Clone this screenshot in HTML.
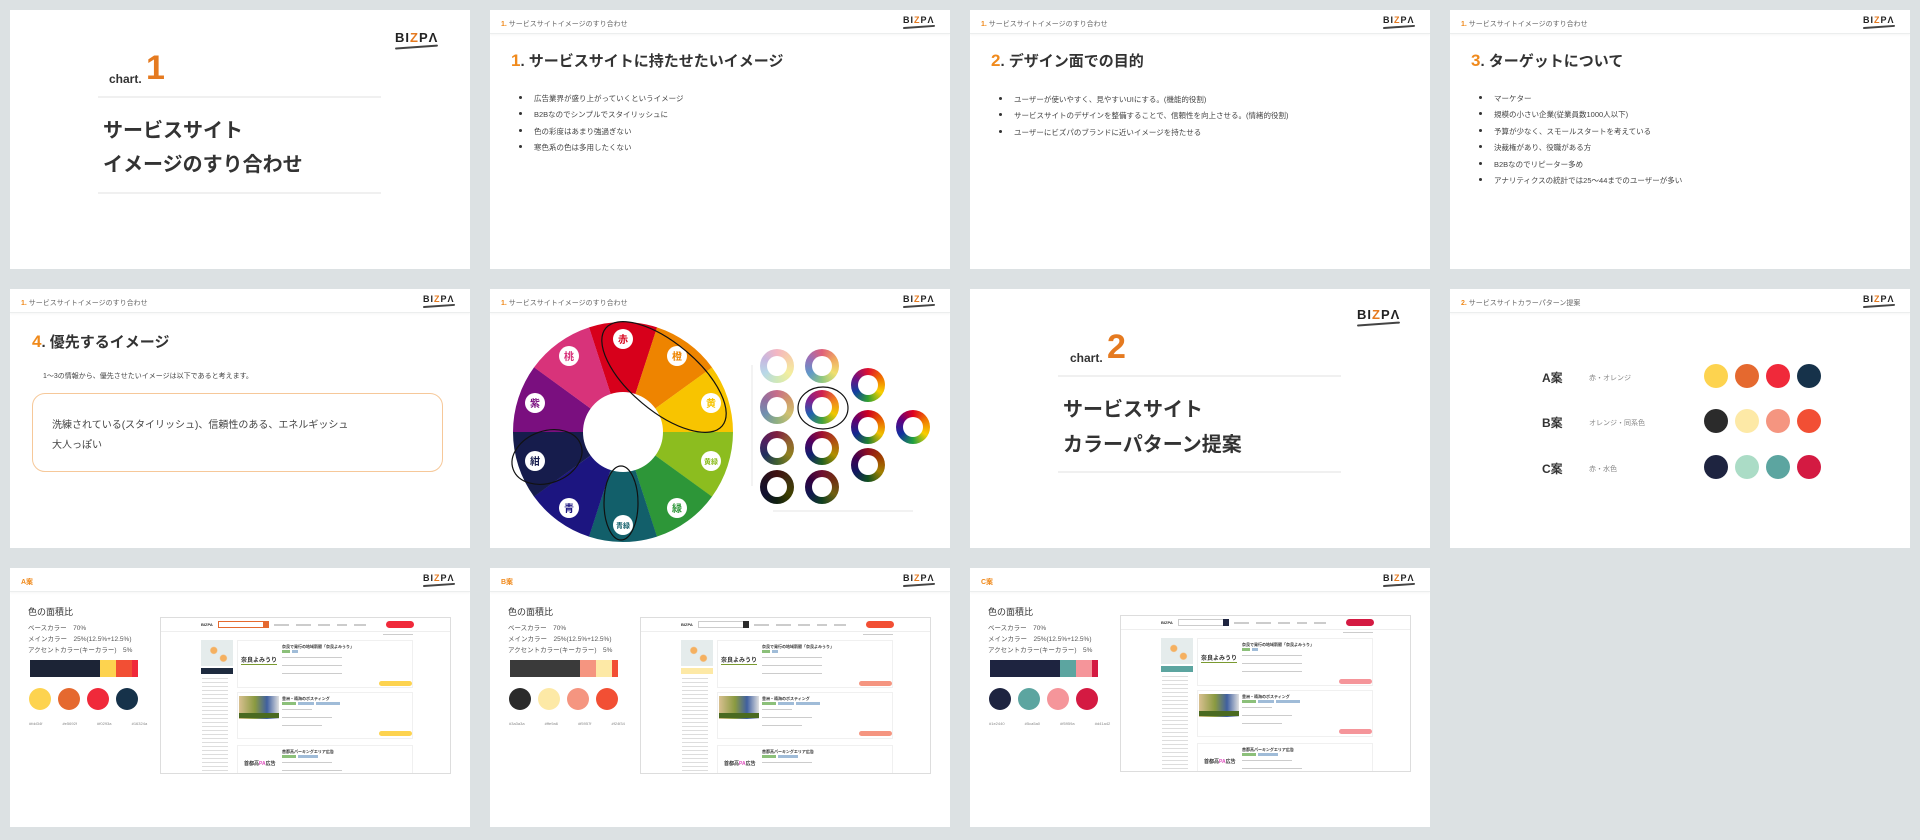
<!DOCTYPE html>
<html><head><meta charset="utf-8"><style>
*{margin:0;padding:0;box-sizing:border-box}
body{width:1920px;height:840px;background:#dce1e3;position:relative;overflow:hidden;font-family:"Liberation Sans","Noto Sans CJK JP",sans-serif;color:#333}
.s{position:absolute;width:460px;height:259px;background:#fff;overflow:hidden}
.a{position:absolute}
.hd{position:absolute;left:0;top:0;width:460px;height:24px;border-bottom:1px solid #eceeee;box-shadow:0 1px 2px rgba(0,0,0,.04)}
.ht{position:absolute;left:11px;top:9px;font-size:7px;color:#666;white-space:nowrap}
.ht b{color:#f08a1c;font-weight:bold}
.lg{position:absolute;font-weight:bold;color:#222;letter-spacing:1px;white-space:nowrap}
.lg i{font-style:normal;color:#e57a20}
.lg:after{content:"";position:absolute;left:0;right:0;bottom:-3px;height:2px;background:#444;border-radius:2px;transform:rotate(-4deg)}
.ttl{position:absolute;left:21px;top:40px;font-size:15px;font-weight:bold;color:#333;white-space:nowrap}
.ttl b{color:#f08a1c;font-size:17px}
.ul{position:absolute;left:29px;font-size:7.5px;color:#444;list-style:none}
.ul li{height:16.4px;position:relative;padding-left:15px;white-space:nowrap}
.ul li:before{content:"";position:absolute;left:0;top:3px;width:3px;height:3px;border-radius:50%;background:#333}
.chl{position:absolute;left:88px;width:283px;height:2px;background:#f0f0f0}
.big{position:absolute;left:93px;font-size:20px;font-weight:bold;color:#333;white-space:nowrap}
.dot{position:absolute;border-radius:50%}
.ring{position:absolute;width:34px;height:34px;border-radius:50%}
.ring:after{content:"";position:absolute;left:7px;top:7px;width:20px;height:20px;border-radius:50%;background:#fff}
.mk{position:absolute;left:150px;top:49px;width:291px;height:157px;border:1px solid #ddd;overflow:hidden;background:#fff}
.gl{position:absolute;height:2px;background:#ccc}
.card{position:absolute;left:76px;width:176px;border:1px solid #f0f0f0}
.tag{position:absolute;height:3px;top:0}
</style></head><body>

<div class="s" style="left:10px;top:10px">
<div class="lg" style="left:385px;top:20px;font-size:13px">BI<i>Z</i>PΛ</div>
<div class="a" style="left:99px;top:62px;font-size:12px;font-weight:bold;color:#333">chart.</div>
<div class="a" style="left:136px;top:40px;font-size:34px;font-weight:bold;color:#e57a20;line-height:36px">1</div>
<div class="chl" style="top:86px"></div>
<div class="big" style="top:104px">サービスサイト</div>
<div class="big" style="top:138px">イメージのすり合わせ</div>
<div class="chl" style="top:182px"></div>
</div>

<div class="s" style="left:490px;top:10px">
<div class="hd"></div><div class="ht"><b>1.</b> サービスサイトイメージのすり合わせ</div>
<div class="lg" style="left:413px;top:5px;font-size:9px">BI<i>Z</i>PΛ</div>
<div class="ttl"><b>1</b>. サービスサイトに持たせたいイメージ</div>
<ul class="ul" style="top:83px"><li>広告業界が盛り上がっていくというイメージ</li><li>B2Bなのでシンプルでスタイリッシュに</li><li>色の彩度はあまり強過ぎない</li><li>寒色系の色は多用したくない</li></ul>
</div>

<div class="s" style="left:970px;top:10px">
<div class="hd"></div><div class="ht"><b>1.</b> サービスサイトイメージのすり合わせ</div>
<div class="lg" style="left:413px;top:5px;font-size:9px">BI<i>Z</i>PΛ</div>
<div class="ttl"><b>2</b>. デザイン面での目的</div>
<ul class="ul" style="top:84px"><li>ユーザーが使いやすく、見やすいUIにする。(機能的役割)</li><li>サービスサイトのデザインを整備することで、信頼性を向上させる。(情緒的役割)</li><li>ユーザーにビズパのブランドに近いイメージを持たせる</li></ul>
</div>

<div class="s" style="left:1450px;top:10px">
<div class="hd"></div><div class="ht"><b>1.</b> サービスサイトイメージのすり合わせ</div>
<div class="lg" style="left:413px;top:5px;font-size:9px">BI<i>Z</i>PΛ</div>
<div class="ttl"><b>3</b>. ターゲットについて</div>
<ul class="ul" style="top:83px"><li>マーケター</li><li>規模の小さい企業(従業員数1000人以下)</li><li>予算が少なく、スモールスタートを考えている</li><li>決裁権があり、役職がある方</li><li>B2Bなのでリピーター多め</li><li>アナリティクスの統計では25～44までのユーザーが多い</li></ul>
</div>

<div class="s" style="left:10px;top:289px">
<div class="hd"></div><div class="ht"><b>1.</b> サービスサイトイメージのすり合わせ</div>
<div class="lg" style="left:413px;top:5px;font-size:9px">BI<i>Z</i>PΛ</div>
<div class="ttl" style="left:22px;top:42px"><b>4</b>. 優先するイメージ</div>
<div class="a" style="left:33px;top:82px;font-size:7px;color:#444">1～3の情報から、優先させたいイメージは以下であると考えます。</div>
<div class="a" style="left:22px;top:104px;width:411px;height:79px;border:1.5px solid #f6c899;border-radius:13px"></div>
<div class="a" style="left:42px;top:127px;font-size:10px;color:#444;line-height:20px;white-space:nowrap">洗練されている(スタイリッシュ)、信頼性のある、エネルギッシュ<br>大人っぽい</div>
</div>

<div class="s" style="left:490px;top:289px">
<div class="hd"></div><div class="ht"><b>1.</b> サービスサイトイメージのすり合わせ</div>
<div class="lg" style="left:413px;top:5px;font-size:9px">BI<i>Z</i>PΛ</div>
<svg class="a" style="left:0;top:0" width="460" height="259" font-family="Liberation Sans,Noto Sans CJK JP,sans-serif">
<g fill="none" stroke-width="70" stroke-dasharray="47.2 471.24">
<circle cx="133" cy="143" r="75" stroke="#d7001b" transform="rotate(-108 133 143)"/>
<circle cx="133" cy="143" r="75" stroke="#ee8400" transform="rotate(-72 133 143)"/>
<circle cx="133" cy="143" r="75" stroke="#f8c400" transform="rotate(-36 133 143)"/>
<circle cx="133" cy="143" r="75" stroke="#8cbd1f" transform="rotate(0 133 143)"/>
<circle cx="133" cy="143" r="75" stroke="#2d9638" transform="rotate(36 133 143)"/>
<circle cx="133" cy="143" r="75" stroke="#125f6a" transform="rotate(72 133 143)"/>
<circle cx="133" cy="143" r="75" stroke="#1c1580" transform="rotate(108 133 143)"/>
<circle cx="133" cy="143" r="75" stroke="#161c4c" transform="rotate(144 133 143)"/>
<circle cx="133" cy="143" r="75" stroke="#7a0f7f" transform="rotate(180 133 143)"/>
<circle cx="133" cy="143" r="75" stroke="#d8337a" transform="rotate(216 133 143)"/>
</g>
<g fill="#fff"><circle cx="133" cy="50" r="10"/><circle cx="187" cy="67" r="10"/><circle cx="221" cy="114" r="10"/><circle cx="221" cy="172" r="10"/><circle cx="187" cy="219" r="10"/><circle cx="133" cy="236" r="10"/><circle cx="79" cy="219" r="10"/><circle cx="45" cy="172" r="10"/><circle cx="45" cy="114" r="10"/><circle cx="79" cy="67" r="10"/></g>
<g font-size="10" font-weight="bold" text-anchor="middle">
<text x="133" y="54" fill="#d7001b">赤</text><text x="187" y="71" fill="#ee8400">橙</text><text x="221" y="118" fill="#f8c400">黄</text><text x="221" y="175" fill="#8cbd1f" font-size="7">黄緑</text><text x="187" y="223" fill="#2d9638">緑</text><text x="133" y="239" fill="#125f6a" font-size="7">青緑</text><text x="79" y="223" fill="#1c1580">青</text><text x="45" y="176" fill="#161c4c">紺</text><text x="45" y="118" fill="#7a0f7f">紫</text><text x="79" y="71" fill="#d8337a">桃</text>
</g>
<g fill="none" stroke="#111" stroke-width="1.2">
<ellipse cx="174" cy="88" rx="76" ry="34" transform="rotate(40 174 88)"/>
<ellipse cx="57" cy="168" rx="36" ry="26" transform="rotate(-20 57 168)"/>
<ellipse cx="131" cy="214" rx="17" ry="37"/>
<ellipse cx="333" cy="119" rx="25" ry="21"/>
</g>
<line x1="262" y1="76" x2="262" y2="197" stroke="#ddd" stroke-width=".7"/>
<line x1="283" y1="222" x2="423" y2="222" stroke="#ddd" stroke-width=".7"/>
</svg>
<div class="ring" style="left:270px;top:60px;background:conic-gradient(#f4b6c2,#f6d2a8,#f4ee9e,#cfe8b8,#b8d8e8,#c8b8e0,#f4b6c2)"></div>
<div class="ring" style="left:315px;top:60px;background:conic-gradient(#e0607a,#f0a860,#f0e070,#90c880,#6098c8,#9870b8,#e0607a)"></div>
<div class="ring" style="left:270px;top:101px;background:conic-gradient(#c86e8a,#d09a6a,#d0c070,#90b080,#7090b0,#9070a0,#c86e8a)"></div>
<div class="ring" style="left:315px;top:101px;background:conic-gradient(#d02050,#f08020,#f0c800,#40a040,#2060b0,#802090,#d02050)"></div>
<div class="ring" style="left:361px;top:79px;background:conic-gradient(#e01030,#f07000,#f8d000,#30a030,#1040a0,#701080,#e01030)"></div>
<div class="ring" style="left:361px;top:121px;background:conic-gradient(#d00020,#e86000,#f0c000,#208030,#102890,#600070,#d00020)"></div>
<div class="ring" style="left:406px;top:121px;background:conic-gradient(#e00020,#f07800,#f8d000,#20a040,#1030a0,#600080,#e00020)"></div>
<div class="ring" style="left:270px;top:142px;background:conic-gradient(#802040,#906030,#908020,#406030,#203060,#502060,#802040)"></div>
<div class="ring" style="left:315px;top:142px;background:conic-gradient(#a01030,#b05010,#b09000,#206020,#102070,#500060,#a01030)"></div>
<div class="ring" style="left:361px;top:159px;background:conic-gradient(#901020,#a04000,#a08000,#105020,#101860,#400050,#901020)"></div>
<div class="ring" style="left:270px;top:181px;background:conic-gradient(#401010,#403010,#404000,#102010,#101030,#201020,#401010)"></div>
<div class="ring" style="left:315px;top:181px;background:conic-gradient(#701030,#703010,#706010,#104020,#101850,#300040,#701030)"></div>
</div>

<div class="s" style="left:970px;top:289px">
<div class="lg" style="left:387px;top:18px;font-size:13px">BI<i>Z</i>PΛ</div>
<div class="a" style="left:100px;top:62px;font-size:12px;font-weight:bold;color:#333">chart.</div>
<div class="a" style="left:137px;top:40px;font-size:34px;font-weight:bold;color:#e57a20;line-height:36px">2</div>
<div class="chl" style="top:86px"></div>
<div class="big" style="top:104px">サービスサイト</div>
<div class="big" style="top:139px">カラーパターン提案</div>
<div class="chl" style="top:182px"></div>
</div>

<div class="s" style="left:1450px;top:289px">
<div class="hd"></div><div class="ht"><b>2.</b> サービスサイトカラーパターン提案</div>
<div class="lg" style="left:413px;top:5px;font-size:9px">BI<i>Z</i>PΛ</div>
<div class="a" style="left:92px;top:80px;font-size:12px;font-weight:bold">A案</div>
<div class="a" style="left:139px;top:84px;font-size:7px;color:#888">赤・オレンジ</div>
<div class="a" style="left:92px;top:125px;font-size:12px;font-weight:bold">B案</div>
<div class="a" style="left:139px;top:129px;font-size:7px;color:#888">オレンジ・同系色</div>
<div class="a" style="left:92px;top:171px;font-size:12px;font-weight:bold">C案</div>
<div class="a" style="left:139px;top:175px;font-size:7px;color:#888">赤・水色</div>
<div class="dot" style="left:254px;top:75px;width:24px;height:24px;background:#fdd34f"></div>
<div class="dot" style="left:285px;top:75px;width:24px;height:24px;background:#e5692f"></div>
<div class="dot" style="left:316px;top:75px;width:24px;height:24px;background:#f0293a"></div>
<div class="dot" style="left:347px;top:75px;width:24px;height:24px;background:#16324a"></div>
<div class="dot" style="left:254px;top:120px;width:24px;height:24px;background:#2b2b2b"></div>
<div class="dot" style="left:285px;top:120px;width:24px;height:24px;background:#fde9a6"></div>
<div class="dot" style="left:316px;top:120px;width:24px;height:24px;background:#f59580"></div>
<div class="dot" style="left:347px;top:120px;width:24px;height:24px;background:#f24f34"></div>
<div class="dot" style="left:254px;top:166px;width:24px;height:24px;background:#1e2440"></div>
<div class="dot" style="left:285px;top:166px;width:24px;height:24px;background:#abdcc6"></div>
<div class="dot" style="left:316px;top:166px;width:24px;height:24px;background:#5ca5a0"></div>
<div class="dot" style="left:347px;top:166px;width:24px;height:24px;background:#d41a42"></div>
</div>

<div class="s" style="left:10px;top:568px">
<div class="hd"></div><div class="ht" style="top:9px"><b style="font-size:7px">A案</b></div>
<div class="lg" style="left:413px;top:5px;font-size:9px">BI<i>Z</i>PΛ</div>
<div class="a" style="left:18px;top:37px;font-size:9px">色の面積比</div>
<div class="a" style="left:18px;top:55px;font-size:6.5px;color:#555;line-height:11px;white-space:nowrap">ベースカラー　70%<br>メインカラー　25%(12.5%+12.5%)<br>アクセントカラー(キーカラー)　5%</div>
<div class="a" style="left:20px;top:92px;width:108px;height:17px;display:flex"><div style="width:70px;background:#1c2436"></div><div style="width:16px;background:#fdd34f"></div><div style="width:16px;background:#f24f34"></div><div style="width:6px;background:#f0293a"></div></div>
<div class="dot" style="left:19px;top:120px;width:22px;height:22px;background:#fdd34f"></div>
<div class="dot" style="left:48px;top:120px;width:22px;height:22px;background:#e5692f"></div>
<div class="dot" style="left:77px;top:120px;width:22px;height:22px;background:#f0293a"></div>
<div class="dot" style="left:106px;top:120px;width:22px;height:22px;background:#16324a"></div>
<div class="a" style="left:19px;top:153px;font-size:4px;color:#888;word-spacing:19px;white-space:nowrap">#fdd34f #e5692f #f0293a #16324a</div>
<div class="mk">
<div class="a" style="left:40px;top:4px;font-size:4px;font-weight:bold">BIZPA</div>
<div class="a" style="left:57px;top:3px;width:51px;height:7px;border:1px solid #e5692f"></div><div class="a" style="left:102px;top:3px;width:6px;height:7px;background:#e5692f"></div>
<div class="gl" style="left:113px;top:6px;width:15px"></div><div class="gl" style="left:135px;top:6px;width:15px"></div><div class="gl" style="left:157px;top:6px;width:12px"></div><div class="gl" style="left:176px;top:6px;width:10px"></div><div class="gl" style="left:193px;top:6px;width:12px"></div>
<div class="a" style="left:225px;top:3px;width:28px;height:7px;border-radius:4px;background:#f0293a"></div>
<div class="a" style="left:0;top:13px;width:291px;height:1px;background:#eee"></div>
<div class="gl" style="left:222px;top:16px;width:30px;height:1px"></div>
<div class="a" style="left:40px;top:22px;width:32px;height:26px;background:radial-gradient(circle at 40% 40%,#f5b060 0 3px,transparent 4px),radial-gradient(circle at 70% 70%,#f5b060 0 3px,transparent 4px),#e5ecec"></div>
<div class="a" style="left:40px;top:50px;width:32px;height:6px;background:#1e2b3f"></div>
<div class="a" style="left:41px;top:58px;width:26px;height:99px;background:repeating-linear-gradient(#fff 0 2px,#ddd 2px 3px,#fff 3px 4px)"></div>
<div class="card" style="top:22px;height:48px"><div class="a" style="left:3px;top:14px;font-size:6px;font-weight:bold;border-bottom:1px solid #7a9a30">奈良よみうり</div><div class="a" style="left:44px;top:3px;font-size:4px;font-weight:bold">奈良で発行の地域新聞「奈良よみうり」</div><div class="tag" style="left:44px;top:9px;width:8px;background:#8cc07a"></div><div class="tag" style="left:54px;top:9px;width:6px;background:#a0bcd8"></div><div class="gl" style="left:44px;top:16px;width:60px;height:1px"></div><div class="gl" style="left:44px;top:24px;width:60px;height:1px"></div><div class="gl" style="left:44px;top:32px;width:60px;height:1px"></div><div class="a" style="left:141px;top:40px;width:33px;height:5px;border-radius:3px;background:#fdd34f"></div></div>
<div class="card" style="top:74px;height:47px"><div class="a" style="left:1px;top:3px;width:40px;height:23px;background:linear-gradient(90deg,#d8c090,#8a9a40 40%,#4060a0 70%,#e0e0e0)"></div><div class="a" style="left:1px;top:20px;width:40px;height:5px;background:#4a6a20"></div><div class="a" style="left:44px;top:3px;font-size:4px;font-weight:bold">豊洲・晴海のポスティング</div><div class="tag" style="left:44px;top:9px;width:14px;background:#8cc07a"></div><div class="tag" style="left:60px;top:9px;width:16px;background:#a0bcd8"></div><div class="tag" style="left:78px;top:9px;width:24px;background:#a0bcd8"></div><div class="gl" style="left:44px;top:16px;width:30px;height:1px"></div><div class="gl" style="left:44px;top:24px;width:50px;height:1px"></div><div class="gl" style="left:44px;top:32px;width:40px;height:1px"></div><div class="a" style="left:141px;top:38px;width:33px;height:5px;border-radius:3px;background:#fdd34f"></div></div>
<div class="card" style="top:127px;height:40px"><div class="a" style="left:6px;top:14px;font-size:5px;font-weight:bold">首都高<span style="color:#e050c0">PA</span>広告</div><div class="a" style="left:44px;top:3px;font-size:4px;font-weight:bold">首都高パーキングエリア広告</div><div class="tag" style="left:44px;top:9px;width:14px;background:#8cc07a"></div><div class="tag" style="left:60px;top:9px;width:20px;background:#a0bcd8"></div><div class="gl" style="left:44px;top:16px;width:50px;height:1px"></div><div class="gl" style="left:44px;top:24px;width:60px;height:1px"></div></div>
</div>
</div>

<div class="s" style="left:490px;top:568px">
<div class="hd"></div><div class="ht" style="top:9px"><b style="font-size:7px">B案</b></div>
<div class="lg" style="left:413px;top:5px;font-size:9px">BI<i>Z</i>PΛ</div>
<div class="a" style="left:18px;top:37px;font-size:9px">色の面積比</div>
<div class="a" style="left:18px;top:55px;font-size:6.5px;color:#555;line-height:11px;white-space:nowrap">ベースカラー　70%<br>メインカラー　25%(12.5%+12.5%)<br>アクセントカラー(キーカラー)　5%</div>
<div class="a" style="left:20px;top:92px;width:108px;height:17px;display:flex"><div style="width:70px;background:#3a3a3a"></div><div style="width:16px;background:#f59580"></div><div style="width:16px;background:#fde9a6"></div><div style="width:6px;background:#f24f34"></div></div>
<div class="dot" style="left:19px;top:120px;width:22px;height:22px;background:#2b2b2b"></div>
<div class="dot" style="left:48px;top:120px;width:22px;height:22px;background:#fde9a6"></div>
<div class="dot" style="left:77px;top:120px;width:22px;height:22px;background:#f59580"></div>
<div class="dot" style="left:106px;top:120px;width:22px;height:22px;background:#f24f34"></div>
<div class="a" style="left:19px;top:153px;font-size:4px;color:#888;word-spacing:19px;white-space:nowrap">#3a3a3a #ffe9a6 #f5957f #f24f34</div>
<div class="mk">
<div class="a" style="left:40px;top:4px;font-size:4px;font-weight:bold">BIZPA</div>
<div class="a" style="left:57px;top:3px;width:51px;height:7px;border:1px solid #ccc"></div><div class="a" style="left:102px;top:3px;width:6px;height:7px;background:#2b2b2b"></div>
<div class="gl" style="left:113px;top:6px;width:15px"></div><div class="gl" style="left:135px;top:6px;width:15px"></div><div class="gl" style="left:157px;top:6px;width:12px"></div><div class="gl" style="left:176px;top:6px;width:10px"></div><div class="gl" style="left:193px;top:6px;width:12px"></div>
<div class="a" style="left:225px;top:3px;width:28px;height:7px;border-radius:4px;background:#f24f34"></div>
<div class="a" style="left:0;top:13px;width:291px;height:1px;background:#eee"></div>
<div class="gl" style="left:222px;top:16px;width:30px;height:1px"></div>
<div class="a" style="left:40px;top:22px;width:32px;height:26px;background:radial-gradient(circle at 40% 40%,#f5b060 0 3px,transparent 4px),radial-gradient(circle at 70% 70%,#f5b060 0 3px,transparent 4px),#e5ecec"></div>
<div class="a" style="left:40px;top:50px;width:32px;height:6px;background:#fde9a6"></div>
<div class="a" style="left:41px;top:58px;width:26px;height:99px;background:repeating-linear-gradient(#fff 0 2px,#ddd 2px 3px,#fff 3px 4px)"></div>
<div class="card" style="top:22px;height:48px"><div class="a" style="left:3px;top:14px;font-size:6px;font-weight:bold;border-bottom:1px solid #7a9a30">奈良よみうり</div><div class="a" style="left:44px;top:3px;font-size:4px;font-weight:bold">奈良で発行の地域新聞「奈良よみうり」</div><div class="tag" style="left:44px;top:9px;width:8px;background:#8cc07a"></div><div class="tag" style="left:54px;top:9px;width:6px;background:#a0bcd8"></div><div class="gl" style="left:44px;top:16px;width:60px;height:1px"></div><div class="gl" style="left:44px;top:24px;width:60px;height:1px"></div><div class="gl" style="left:44px;top:32px;width:60px;height:1px"></div><div class="a" style="left:141px;top:40px;width:33px;height:5px;border-radius:3px;background:#f59580"></div></div>
<div class="card" style="top:74px;height:47px"><div class="a" style="left:1px;top:3px;width:40px;height:23px;background:linear-gradient(90deg,#d8c090,#8a9a40 40%,#4060a0 70%,#e0e0e0)"></div><div class="a" style="left:1px;top:20px;width:40px;height:5px;background:#4a6a20"></div><div class="a" style="left:44px;top:3px;font-size:4px;font-weight:bold">豊洲・晴海のポスティング</div><div class="tag" style="left:44px;top:9px;width:14px;background:#8cc07a"></div><div class="tag" style="left:60px;top:9px;width:16px;background:#a0bcd8"></div><div class="tag" style="left:78px;top:9px;width:24px;background:#a0bcd8"></div><div class="gl" style="left:44px;top:16px;width:30px;height:1px"></div><div class="gl" style="left:44px;top:24px;width:50px;height:1px"></div><div class="gl" style="left:44px;top:32px;width:40px;height:1px"></div><div class="a" style="left:141px;top:38px;width:33px;height:5px;border-radius:3px;background:#f59580"></div></div>
<div class="card" style="top:127px;height:40px"><div class="a" style="left:6px;top:14px;font-size:5px;font-weight:bold">首都高<span style="color:#e050c0">PA</span>広告</div><div class="a" style="left:44px;top:3px;font-size:4px;font-weight:bold">首都高パーキングエリア広告</div><div class="tag" style="left:44px;top:9px;width:14px;background:#8cc07a"></div><div class="tag" style="left:60px;top:9px;width:20px;background:#a0bcd8"></div><div class="gl" style="left:44px;top:16px;width:50px;height:1px"></div></div>
</div>
</div>

<div class="s" style="left:970px;top:568px">
<div class="hd"></div><div class="ht" style="top:9px"><b style="font-size:7px">C案</b></div>
<div class="lg" style="left:413px;top:5px;font-size:9px">BI<i>Z</i>PΛ</div>
<div class="a" style="left:18px;top:37px;font-size:9px">色の面積比</div>
<div class="a" style="left:18px;top:55px;font-size:6.5px;color:#555;line-height:11px;white-space:nowrap">ベースカラー　70%<br>メインカラー　25%(12.5%+12.5%)<br>アクセントカラー(キーカラー)　5%</div>
<div class="a" style="left:20px;top:92px;width:108px;height:17px;display:flex"><div style="width:70px;background:#1e2440"></div><div style="width:16px;background:#5ca5a0"></div><div style="width:16px;background:#f5959a"></div><div style="width:6px;background:#d41a42"></div></div>
<div class="dot" style="left:19px;top:120px;width:22px;height:22px;background:#1e2440"></div>
<div class="dot" style="left:48px;top:120px;width:22px;height:22px;background:#5ca5a0"></div>
<div class="dot" style="left:77px;top:120px;width:22px;height:22px;background:#f5959a"></div>
<div class="dot" style="left:106px;top:120px;width:22px;height:22px;background:#d41a42"></div>
<div class="a" style="left:19px;top:153px;font-size:4px;color:#888;word-spacing:19px;white-space:nowrap">#1e2440 #5ca5a0 #f5959a #d41a42</div>
<div class="mk" style="top:47px">
<div class="a" style="left:40px;top:4px;font-size:4px;font-weight:bold">BIZPA</div>
<div class="a" style="left:57px;top:3px;width:51px;height:7px;border:1px solid #ccc"></div><div class="a" style="left:102px;top:3px;width:6px;height:7px;background:#1e2440"></div>
<div class="gl" style="left:113px;top:6px;width:15px"></div><div class="gl" style="left:135px;top:6px;width:15px"></div><div class="gl" style="left:157px;top:6px;width:12px"></div><div class="gl" style="left:176px;top:6px;width:10px"></div><div class="gl" style="left:193px;top:6px;width:12px"></div>
<div class="a" style="left:225px;top:3px;width:28px;height:7px;border-radius:4px;background:#d41a42"></div>
<div class="a" style="left:0;top:13px;width:291px;height:1px;background:#eee"></div>
<div class="gl" style="left:222px;top:16px;width:30px;height:1px"></div>
<div class="a" style="left:40px;top:22px;width:32px;height:26px;background:radial-gradient(circle at 40% 40%,#f5b060 0 3px,transparent 4px),radial-gradient(circle at 70% 70%,#f5b060 0 3px,transparent 4px),#e5ecec"></div>
<div class="a" style="left:40px;top:50px;width:32px;height:6px;background:#5ca5a0"></div>
<div class="a" style="left:41px;top:58px;width:26px;height:99px;background:repeating-linear-gradient(#fff 0 2px,#ddd 2px 3px,#fff 3px 4px)"></div>
<div class="card" style="top:22px;height:48px"><div class="a" style="left:3px;top:14px;font-size:6px;font-weight:bold;border-bottom:1px solid #7a9a30">奈良よみうり</div><div class="a" style="left:44px;top:3px;font-size:4px;font-weight:bold">奈良で発行の地域新聞「奈良よみうり」</div><div class="tag" style="left:44px;top:9px;width:8px;background:#8cc07a"></div><div class="tag" style="left:54px;top:9px;width:6px;background:#a0bcd8"></div><div class="gl" style="left:44px;top:16px;width:60px;height:1px"></div><div class="gl" style="left:44px;top:24px;width:60px;height:1px"></div><div class="gl" style="left:44px;top:32px;width:60px;height:1px"></div><div class="a" style="left:141px;top:40px;width:33px;height:5px;border-radius:3px;background:#f5959a"></div></div>
<div class="card" style="top:74px;height:47px"><div class="a" style="left:1px;top:3px;width:40px;height:23px;background:linear-gradient(90deg,#d8c090,#8a9a40 40%,#4060a0 70%,#e0e0e0)"></div><div class="a" style="left:1px;top:20px;width:40px;height:5px;background:#4a6a20"></div><div class="a" style="left:44px;top:3px;font-size:4px;font-weight:bold">豊洲・晴海のポスティング</div><div class="tag" style="left:44px;top:9px;width:14px;background:#8cc07a"></div><div class="tag" style="left:60px;top:9px;width:16px;background:#a0bcd8"></div><div class="tag" style="left:78px;top:9px;width:24px;background:#a0bcd8"></div><div class="gl" style="left:44px;top:16px;width:30px;height:1px"></div><div class="gl" style="left:44px;top:24px;width:50px;height:1px"></div><div class="gl" style="left:44px;top:32px;width:40px;height:1px"></div><div class="a" style="left:141px;top:38px;width:33px;height:5px;border-radius:3px;background:#f5959a"></div></div>
<div class="card" style="top:127px;height:40px"><div class="a" style="left:6px;top:14px;font-size:5px;font-weight:bold">首都高<span style="color:#e050c0">PA</span>広告</div><div class="a" style="left:44px;top:3px;font-size:4px;font-weight:bold">首都高パーキングエリア広告</div><div class="tag" style="left:44px;top:9px;width:14px;background:#8cc07a"></div><div class="tag" style="left:60px;top:9px;width:20px;background:#a0bcd8"></div><div class="gl" style="left:44px;top:16px;width:50px;height:1px"></div><div class="gl" style="left:44px;top:24px;width:60px;height:1px"></div></div>
</div>
</div>

</body></html>
